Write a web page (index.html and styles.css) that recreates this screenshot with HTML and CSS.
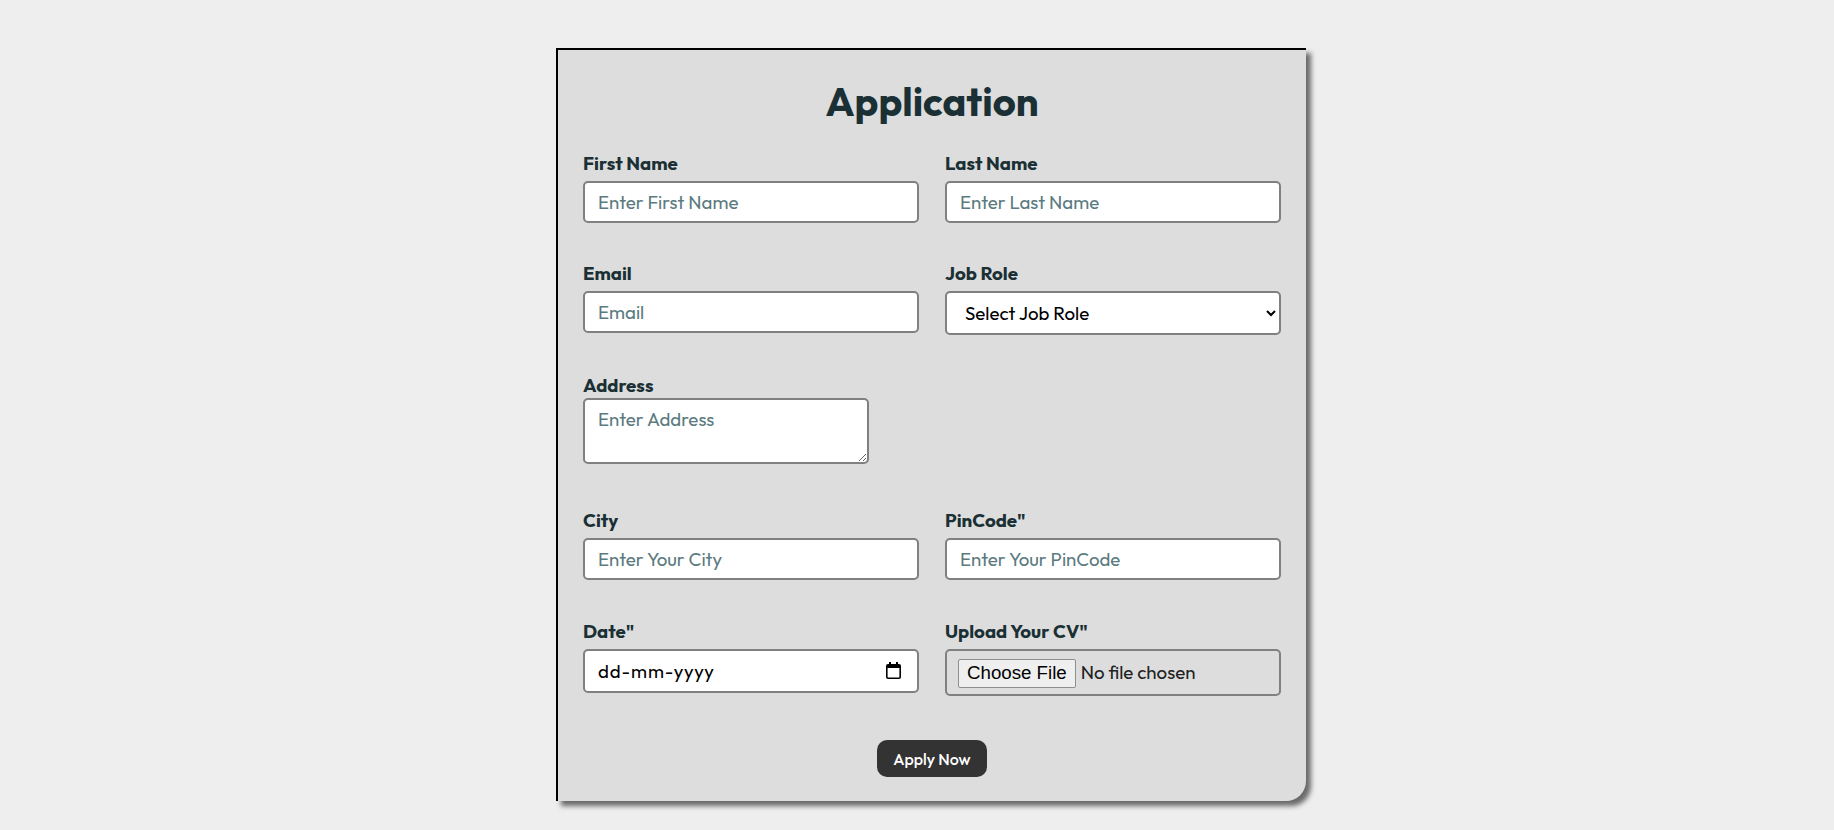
FILE: index.html
```html
<!DOCTYPE html>
<html lang="en">
<head>
<meta charset="utf-8">
<title>Application</title>
<link rel="stylesheet" href="styles.css">
</head>
<body>
<div class="page">
  <div class="card">
    <h1 class="title">Application</h1>
    <form class="form">
      <div class="row">
        <div class="field">
          <label class="label" for="fname">First Name</label>
          <input class="control" id="fname" type="text" placeholder="Enter First Name">
        </div>
        <div class="field">
          <label class="label" for="lname">Last Name</label>
          <input class="control" id="lname" type="text" placeholder="Enter Last Name">
        </div>
      </div>
      <div class="row">
        <div class="field">
          <label class="label" for="email">Email</label>
          <input class="control" id="email" type="email" placeholder="Email">
        </div>
        <div class="field">
          <label class="label" for="role">Job Role</label>
          <select class="control select" id="role">
            <option>Select Job Role</option>
          </select>
        </div>
      </div>
      <div class="row row-address">
        <div class="field field-address">
          <label class="label" for="address">Address</label>
          <textarea class="control textarea" id="address" placeholder="Enter Address"></textarea>
        </div>
      </div>
      <div class="row row-city">
        <div class="field">
          <label class="label" for="city">City</label>
          <input class="control" id="city" type="text" placeholder="Enter Your City">
        </div>
        <div class="field">
          <label class="label" for="pin">PinCode"</label>
          <input class="control" id="pin" type="text" placeholder="Enter Your PinCode">
        </div>
      </div>
      <div class="row row-last">
        <div class="field">
          <label class="label" for="date">Date"</label>
          <div class="date-wrap">
            <input class="control date" id="date" type="text" placeholder="dd-mm-yyyy">
            <svg class="date-icon" width="15" height="17" viewBox="0 0 15 17" aria-hidden="true">
              <path d="M3 0h2v2h5V0h2v2h1a2 2 0 0 1 2 2v11a2 2 0 0 1-2 2H2a2 2 0 0 1-2-2V4a2 2 0 0 1 2-2h1V0zM1.6 6v9c0 .25.15.4.4.4h11c.25 0 .4-.15.4-.4V6H1.6z" fill="#000"/>
            </svg>
          </div>
        </div>
        <div class="field">
          <label class="label" for="cv">Upload Your CV"</label>
          <input class="control file" id="cv" type="file">
        </div>
      </div>
      <div class="actions">
        <button class="submit" type="button">Apply Now</button>
      </div>
    </form>
  </div>
</div>
</body>
</html>
```

FILE: styles.css
```css
* {
  box-sizing: border-box;
}

html, body {
  margin: 0;
  padding: 0;
  background: #eeeeee;
}

body {
  font-family: "Outfit", "Lato", "Noto Sans", sans-serif;
  color: #1a3034;
}

.page {
  padding: 48px 0 0 28px;
  display: flex;
  justify-content: center;
  height: 830px;
}

.card {
  width: 750px;
  height: 753px;
  background: #dddddd;
  border-top: 2px solid #000;
  border-left: 2px solid #000;
  border-bottom-right-radius: 20px;
  box-shadow: 5px 5px 5px #6a6a6a;
  padding: 27px 25px 24px 25px;
}

.title {
  margin: 0 0 27px 0;
  font-size: 40px;
  line-height: 48px;
  font-weight: 700;
  text-align: center;
  color: #1a3034;
}

.form {
  display: flex;
  flex-direction: column;
}

.row {
  display: flex;
  gap: 26px;
  margin-bottom: 39px;
}

.row-address {
  margin-bottom: 45px;
}

.row-city {
  margin-bottom: 40px;
}

.row-last {
  margin-bottom: 44px;
}

.field {
  flex: 1 1 0;
  display: flex;
  flex-direction: column;
  gap: 7px;
}

.field-address {
  flex: 0 0 auto;
  gap: 2px;
}

.label {
  font-size: 18.7px;
  line-height: 22px;
  font-weight: 700;
  color: #1a3034;
}

.control {
  width: 100%;
  height: 42px;
  border: 2px solid #808080;
  border-radius: 5px;
  background: #ffffff;
  padding: 0 13px;
  font-family: "Outfit", "Lato", "Noto Sans", sans-serif;
  font-size: 18.7px;
  color: #000;
  margin: 0;
}

.control::placeholder {
  color: #5b7b80;
}

.select {
  height: 44px;
  padding: 0 10px 0 14px;
}

.textarea {
  width: 286px;
  height: 66px;
  padding: 7px 13px;
  resize: vertical;
}

.date-wrap {
  position: relative;
}

.date {
  height: 44px;
  letter-spacing: 0.9px;
}

.date::placeholder {
  color: #000;
}

.date-icon {
  position: absolute;
  right: 18px;
  top: 13px;
}

.file {
  height: 47px;
  background: transparent;
  padding: 0 11px;
  color: #222;
  line-height: 43px;
}

.file::file-selector-button {
  font-family: "Liberation Sans", Arial, sans-serif;
  font-size: 18.7px;
  height: 29px;
  padding: 0 8px;
  margin-right: 5px;
  border: 1px solid #8f8f8f;
  border-radius: 2px;
  background: #efefef;
  color: #000;
}

.actions {
  display: flex;
  justify-content: center;
}

.submit {
  width: 110px;
  height: 37px;
  border: none;
  border-radius: 10px;
  background: #333333;
  color: #ffffff;
  font-family: "Outfit", "Lato", "Noto Sans", sans-serif;
  font-size: 16px;
  font-weight: 500;
  padding: 0;
}
```
